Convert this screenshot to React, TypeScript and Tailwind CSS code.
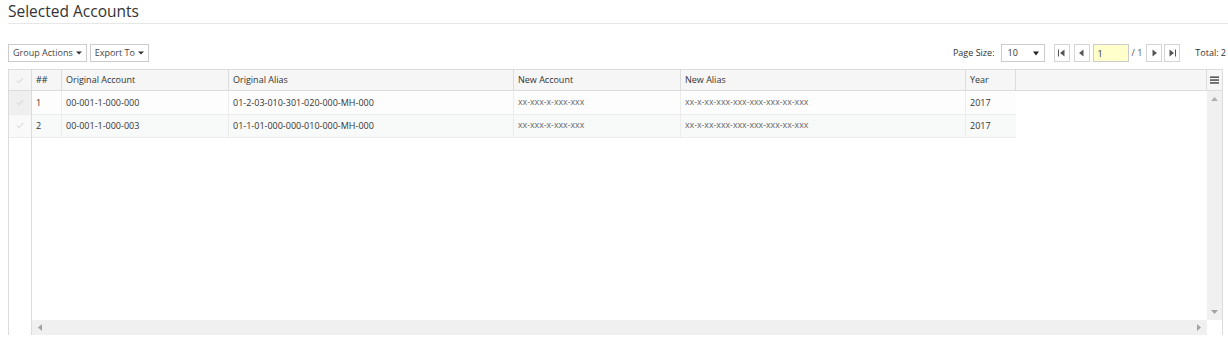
import { useState } from 'react';

const rows = [
  { n: 1, oa: '00-001-1-000-000', al: '01-2-03-010-301-020-000-MH-000', na: 'xx-xxx-x-xxx-xxx', nal: 'xx-x-xx-xxx-xxx-xxx-xxx-xx-xxx', y: '2017' },
  { n: 2, oa: '00-001-1-000-003', al: '01-1-01-000-000-010-000-MH-000', na: 'xx-xxx-x-xxx-xxx', nal: 'xx-x-xx-xxx-xxx-xxx-xxx-xx-xxx', y: '2017' },
];

function Check() {
  return (
    <svg width="8" height="7" viewBox="0 0 8 7">
      <path d="M0.8 3.6 L3 5.6 L7.2 1" fill="none" stroke="#cfcfcf" strokeWidth="1" />
    </svg>
  );
}

function Caret({ color = '#333' }: { color?: string }) {
  return (
    <svg width="6" height="4" viewBox="0 0 6 4" className="ml-[3px]">
      <path d="M0 0.5 H6 L3 3.5 Z" fill={color} />
    </svg>
  );
}

function PagerBtn({ kind }: { kind: 'first' | 'prev' | 'next' | 'last' }) {
  return (
    <div className="w-[16px] h-[18px] border border-[#d4d4d4] bg-white flex items-center justify-center">
      <svg width="9" height="8" viewBox="0 0 9 8">
        {kind === 'first' && (
          <>
            <rect x="1" y="0.5" width="1" height="7" fill="#555" />
            <path d="M7.5 0.5 V7.5 L3 4 Z" fill="#555" />
          </>
        )}
        {kind === 'prev' && <path d="M6.5 0.5 V7.5 L2 4 Z" fill="#555" />}
        {kind === 'next' && <path d="M2.5 0.5 V7.5 L7 4 Z" fill="#555" />}
        {kind === 'last' && (
          <>
            <path d="M1.5 0.5 V7.5 L6 4 Z" fill="#555" />
            <rect x="7" y="0.5" width="1" height="7" fill="#555" />
          </>
        )}
      </svg>
    </div>
  );
}

const cols = [
  { key: 'n', label: '##', w: 'w-[30px]' },
  { key: 'oa', label: 'Original Account', w: 'w-[167px]' },
  { key: 'al', label: 'Original Alias', w: 'w-[285px]' },
  { key: 'na', label: 'New Account', w: 'w-[167px]' },
  { key: 'nal', label: 'New Alias', w: 'w-[285px]' },
  { key: 'y', label: 'Year', w: 'w-[50px]' },
] as const;

export default function App() {
  const [page, setPage] = useState('1');

  return (
    <div className="w-[1228px] h-[337px] overflow-hidden bg-white text-[#333] font-['Open_Sans',sans-serif]">
      <div className="ml-[8px] h-[24px] border-b border-[#e7e7e7]">
        <h1 className="text-[15.5px] leading-[23px] text-[#333]">Selected Accounts</h1>
      </div>

      <div className="flex items-center justify-between mt-[20px] h-[18px] pl-[8px] pr-[2px]">
        <div className="flex gap-[3px]">
          <button className="h-[18px] px-[4px] border border-[#ccc] bg-white text-[9px] text-[#444] flex items-center">
            Group Actions <Caret />
          </button>
          <button className="h-[18px] px-[4px] border border-[#ccc] bg-white text-[9px] text-[#444] flex items-center">
            Export To <Caret />
          </button>
        </div>
        <div className="flex items-center text-[9px] text-[#333]">
          <span className="mr-[6px]">Page Size:</span>
          <div className="w-[44px] h-[18px] border border-[#ccc] bg-white flex items-center justify-between pl-[6px] pr-[5px]">
            <span>10</span>
            <svg width="6" height="5" viewBox="0 0 6 5">
              <path d="M0 0.5 H6 L3 4.5 Z" fill="#222" />
            </svg>
          </div>
          <div className="flex items-center gap-[4px] ml-[9px]">
            <PagerBtn kind="first" />
            <PagerBtn kind="prev" />
          </div>
          <input
            value={page}
            onChange={(e) => setPage(e.target.value)}
            className="ml-[3px] w-[36px] h-[18px] border border-[#ccc] bg-[#ffffcc] px-[4px] text-[9px] outline-none"
          />
          <span className="ml-[3px] mr-[4px] text-[#555]">/ 1</span>
          <div className="flex items-center gap-[2px]">
            <PagerBtn kind="next" />
            <PagerBtn kind="last" />
          </div>
          <span className="ml-[15px]">Total: 2</span>
        </div>
      </div>

      <div className="ml-[8px] mt-[7px] w-[1215px] border-t border-l border-r border-[#dcdcdc]">
        {/* header */}
        <div className="flex h-[21px] bg-[#f6f6f6] border-b border-[#dcdcdc] text-[9px]">
          <div className="w-[23px] border-r border-[#dcdcdc] flex items-center justify-center">
            <Check />
          </div>
          {cols.map((c) => (
            <div key={c.key} className={`${c.w} border-r border-[#dcdcdc] px-[4px] flex items-center`}>
              {c.label}
            </div>
          ))}
          <div className="flex-1 border-r border-[#dcdcdc]" />
          <div className="w-[15px] flex items-center justify-center bg-[#f6f6f6]">
            <svg width="9" height="8" viewBox="0 0 9 8">
              <rect x="0" y="0.5" width="9" height="1.3" fill="#333" />
              <rect x="0" y="3.4" width="9" height="1.3" fill="#333" />
              <rect x="0" y="6.3" width="9" height="1.3" fill="#333" />
            </svg>
          </div>
        </div>

        {/* body */}
        <div className="flex h-[244px]">
          <div className="w-[23px] border-r border-[#dcdcdc] flex flex-col">
            {rows.map((r, i) => (
              <div
                key={r.n}
                className={`h-[23.5px] flex items-center justify-center border-b border-[#ececec] ${i === 0 ? 'bg-[#efefef]' : 'bg-[#f9f9f9]'}`}
              >
                <Check />
              </div>
            ))}
          </div>

          <div className="flex-1 flex flex-col">
            <div className="flex-1">
              {rows.map((r, i) => (
                <div
                  key={r.n}
                  className={`flex h-[23.5px] w-[984px] border-b border-[#ececec] text-[9px] ${i === 0 ? 'bg-[#fdfdfd]' : 'bg-[#f8f9f9]'}`}
                >
                  {cols.map((c) => (
                    <div
                      key={c.key}
                      className={`${c.w} ${c.key === 'y' ? '' : 'border-r border-[#ececec]'} px-[4px] flex items-center ${
                        c.key === 'na' || c.key === 'nal' ? 'text-[8.75px] text-[#666]' : ''
                      }`}
                    >
                      {r[c.key]}
                    </div>
                  ))}
                </div>
              ))}
            </div>
            <div className="h-[15px] bg-[#f0f0f0] flex items-center justify-between px-[6px]">
              <svg width="4" height="7" viewBox="0 0 4 7">
                <path d="M4 0 V7 L0 3.5 Z" fill="#a3a3a3" />
              </svg>
              <svg width="4" height="7" viewBox="0 0 4 7">
                <path d="M0 0 V7 L4 3.5 Z" fill="#a3a3a3" />
              </svg>
            </div>
          </div>

          <div className="w-[15px] flex flex-col">
            <div className="flex-1 bg-[#f0f0f0] flex flex-col items-center justify-between pt-[6px] pb-[6px]">
              <svg width="7" height="4" viewBox="0 0 7 4">
                <path d="M0 4 H7 L3.5 0 Z" fill="#b0b0b0" />
              </svg>
              <svg width="7" height="4" viewBox="0 0 7 4">
                <path d="M0 0 H7 L3.5 4 Z" fill="#a3a3a3" />
              </svg>
            </div>
            <div className="h-[15px] bg-white" />
          </div>
        </div>
      </div>
    </div>
  );
}
